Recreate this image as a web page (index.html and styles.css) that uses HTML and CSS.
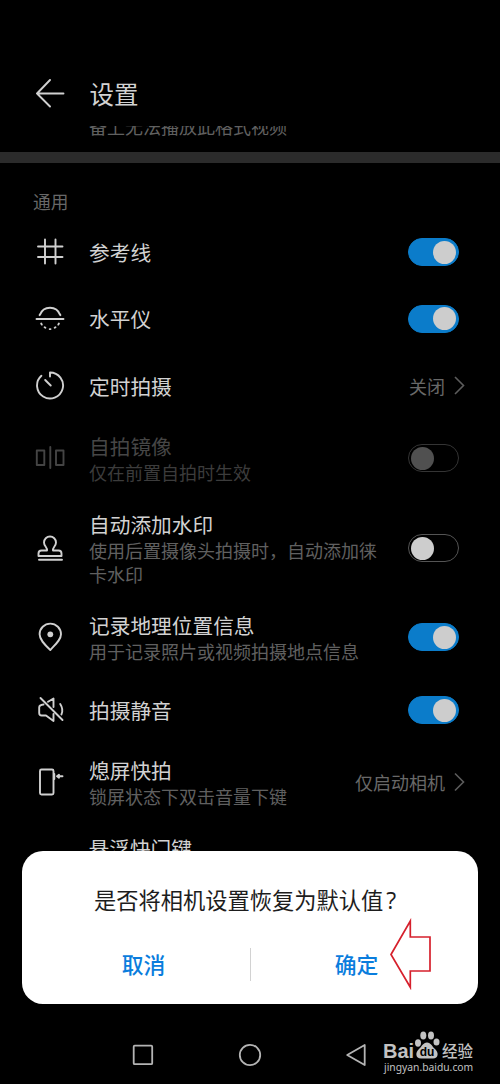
FILE: index.html
```html
<!DOCTYPE html>
<html lang="zh-CN">
<head>
<meta charset="utf-8">
<title>设置</title>
<link rel="stylesheet" href="styles.css">
</head>
<body>
<main class="screen">
  <header class="header">
    <svg class="icon" viewBox="0 0 30 30"><path d="M28.500 14.500H2M15 1 2 14.500l13 13"/></svg>
    <h1 class="heading">设置</h1>
  </header>
  <div class="list">
    <p class="clipped">备上无法播放此格式视频</p>
    <div class="divider"></div>
    <h2 class="section">通用</h2>

    <div class="row row-grid">
      <svg class="icon" viewBox="0 0 30 30"><path d="M10 2.500v24M20.500 2.500v24M3 9.500h24.500M3 20h24.500"/></svg>
      <div class="text"><div class="title">参考线</div></div>
      <span class="toggle on"></span>
    </div>
    <div class="row row-level">
      <svg class="icon" viewBox="0 0 30 30"><path d="M1.500 15h27"/><path d="M5 10.800a10.600 10.600 0 0 1 20 0M5 10.200l-.4 1M25 10.200l.4 1"/><path d="M6.200 19.500l.6 1.100M9.600 23.300l.8.500M14.700 25.100h.8M19.700 23.800l.8-.5M23.300 20.600l.6-1.100"/></svg>
      <div class="text"><div class="title">水平仪</div></div>
      <span class="toggle on"></span>
    </div>
    <div class="row row-timer">
      <svg class="icon" viewBox="0 0 30 30"><path d="M15 5.500V1.500A13 13 0 1 1 6.400 4.800M10.200 9l5.500 5.500"/></svg>
      <div class="text"><div class="title">定时拍摄</div></div>
      <span class="value">关闭</span>
      <svg class="chevron" viewBox="0 0 10 18"><path d="m1 0 8.500 8.500L1 17"/></svg>
    </div>
    <div class="row row-mirror disabled">
      <svg class="icon" viewBox="0 0 30 30"><path d="M15.300 4v21M1.800 7.500h7.500v14.500H1.800zM21 7.500h7.500v14.500H21z"/></svg>
      <div class="text"><div class="title">自拍镜像</div><div class="sub">仅在前置自拍时生效</div></div>
      <span class="toggle"></span>
    </div>
    <div class="row row-stamp">
      <svg class="icon" viewBox="0 0 30 30"><path d="M12 17.500c.7-3-3-4.200-3-8a6 6 0 0 1 12 0c0 3.800-3.700 5-3 8h5.500c2 0 3 1 3 3V23h-23v-2.500c0-2 1-3 3-3zM4 26.800h23"/></svg>
      <div class="text"><div class="title">自动添加水印</div><div class="sub">使用后置摄像头拍摄时，自动添加徕卡水印</div></div>
      <span class="toggle"></span>
    </div>
    <div class="row row-location">
      <svg class="icon" viewBox="0 0 30 30"><path d="M15.300 28C9 22 4.600 17.500 4.600 12.300a10.700 10.700 0 0 1 21.400 0C26 17.500 21 22 15.300 28z"/><circle class="dot" cx="15.300" cy="12.300" r="2.900"/></svg>
      <div class="text"><div class="title">记录地理位置信息</div><div class="sub">用于记录照片或视频拍摄地点信息</div></div>
      <span class="toggle on"></span>
    </div>
    <div class="row row-mute">
      <svg class="icon" viewBox="0 0 30 30"><path d="m5.500 3 22 22M13 6.800 18.500 3.500v8.500M8.500 9.500c-2.800.2-4.300 1-4.300 3v5.500c0 1.500 1 2.500 2.500 2.500h4.300l7.500 5.500V19M25.200 9c2.300 3.500 2.600 7.500 1.200 10.500"/></svg>
      <div class="text"><div class="title">拍摄静音</div></div>
      <span class="toggle on"></span>
    </div>
    <div class="row row-snap">
      <svg class="icon" viewBox="0 0 30 30"><rect x="5" y="2.500" width="13.500" height="25" rx="1.500"/><path d="M19.300 7v5"/><path d="M27.500 9.300h-5.500M24 7.800l-2 1.500 2 1.500"/></svg>
      <div class="text"><div class="title">熄屏快拍</div><div class="sub">锁屏状态下双击音量下键</div></div>
      <span class="value">仅启动相机</span>
      <svg class="chevron" viewBox="0 0 10 18"><path d="m1 .5 8.500 8.500L1 17.500"/></svg>
    </div>
    <div class="row row-float"><div class="text"><div class="title">悬浮快门键</div></div></div>
  </div>

  <nav class="navbar">
    <svg class="nav-icon" viewBox="0 0 24 24"><rect x="2.700" y="2.700" width="18.500" height="18.500" rx="1"/></svg>
    <svg class="nav-icon" viewBox="0 0 24 24"><circle cx="12" cy="12" r="10.200"/></svg>
    <svg class="nav-icon" viewBox="0 0 24 24"><path d="M19.700 2v20L2.200 12z"/></svg>
  </nav>

  <section class="dialog">
    <p class="message">是否将相机设置恢复为默认值<span class="mark">?</span></p>
    <div class="actions">
      <button class="action">取消</button>
      <span class="separator"></span>
      <button class="action">确定</button>
    </div>
  </section>
  <svg class="pointer" viewBox="0 0 44 72"><path d="M2 36.500 21.300 3v16H41v34H21.300v16.300z"/></svg>

  <aside class="watermark">
    <div class="brand">
      <span class="latin">Bai</span>
      <svg class="paw" viewBox="0 0 26 28"><ellipse cx="4" cy="12" rx="3" ry="3.700"/><ellipse cx="9.300" cy="4.600" rx="3" ry="4"/><ellipse cx="17" cy="4.600" rx="3" ry="4"/><ellipse cx="22.500" cy="11" rx="3" ry="3.600"/><path d="M13 11.500c4 0 5 4 8 6.500 4 3.500 3.500 9.500-2 9.500H7c-5.500 0-6-6-2-9.500 3-2.500 4-6.500 8-6.500z"/><text x="13" y="25" text-anchor="middle">du</text></svg>
      <span class="cn">经验</span>
    </div>
    <div class="site">jingyan.baidu.com</div>
  </aside>
</main>
</body>
</html>
```
FILE: styles.css
```css
* { box-sizing: border-box; }
body { margin: 0; background: #000; font-family: "Noto Sans CJK SC", sans-serif; }
h1, h2, p { margin: 0; font-weight: 400; }
.screen { position: relative; width: 500px; height: 1084px; overflow: hidden; display: flex; flex-direction: column; background: #000; color: #d2d2d2; }
.icon { width: 30px; height: 30px; flex: none; fill: none; stroke: #d0d0d0; stroke-width: 1.9; stroke-linecap: round; stroke-linejoin: round; }
.icon .dot { fill: #d0d0d0; stroke: none; }

.header { height: 126px; flex: none; display: flex; align-items: center; gap: 25px; padding: 62px 35px 0 34.500px; }
.heading { font-size: 24.500px; line-height: 36px; }
.list { flex: 1; min-height: 0; overflow: hidden; display: flex; flex-direction: column; }
.clipped { height: 26px; flex: none; padding-left: 89px; margin-top: -12px; margin-bottom: 12px; font-size: 18px; line-height: 24px; color: #606060; }
.divider { height: 11px; flex: none; background: #2b2b2b; }
.section { height: 56px; flex: none; padding: 25px 0 0 33px; font-size: 17.700px; line-height: 26px; color: #686868; }

.row { flex: none; display: flex; align-items: center; padding: 0 41px 0 34.500px; }
.row-grid, .row-level { height: 66.500px; }
.row-timer { height: 68px; }
.row-mirror { height: 76px; }
.row-stamp { height: 104px; }
.row-location { height: 74px; }
.row-mute, .row-snap { height: 72px; }
.row-timer, .row-snap { padding-right: 36px; }
.row-float { height: 60px; padding-left: 64px; }
.text { flex: 1; min-width: 0; padding: 0 10px 0 24.500px; }
.row-grid .text, .row-level .text, .row-timer .text, .row-mute .text, .row-float .text { padding-bottom: 1px; }
.title { font-size: 20.700px; line-height: 28px; white-space: nowrap; }
.sub { width: 300px; font-size: 18px; line-height: 24px; color: #606060; }
.value { padding-bottom: 1px; margin-right: 1px; font-size: 18px; line-height: 26px; color: #686868; }
.row-snap .value { padding-bottom: 0; }
.chevron { width: 10px; height: 18px; margin-left: 8px; overflow: visible; fill: none; stroke: #5c5c5c; stroke-width: 1.600; }
.toggle { width: 51px; height: 28px; flex: none; display: flex; align-items: center; padding: 0 2px; border: 1px solid #545454; border-radius: 14px; }
.toggle::before { content: ""; width: 23px; height: 23px; border-radius: 50%; background: #cdcdcd; }
.toggle.on { justify-content: flex-end; background: #0b7cca; border-color: #0b7cca; }
.disabled .icon { stroke: #444; }
.disabled .title { color: #464646; }
.disabled .sub { color: #3c3c3c; }
.disabled .toggle { border-color: #343434; }
.disabled .toggle::before { background: #505050; }

.navbar { height: 59px; flex: none; display: flex; align-items: center; gap: 83px; padding-left: 131px; }
.nav-icon { width: 24px; height: 24px; fill: none; stroke: #b4b4b4; stroke-width: 1.800; stroke-linejoin: round; }

.dialog { position: absolute; left: 22px; top: 851px; width: 456px; height: 152.500px; border-radius: 21px; background: #fff; }
.message { padding: 31px 0 0 72px; font-size: 22.250px; line-height: 34px; color: #1d1d1d; white-space: nowrap; }
.mark { margin-left: 3px; font-family: "Open Sans", sans-serif; font-size: 23px; line-height: 1; }
.actions { display: flex; align-items: center; justify-content: center; margin-top: 31px; }
.action { width: 212px; padding: 0; border: 0; background: none; color: #0a7ddd; font: 500 21.800px/34px "Noto Sans CJK SC", sans-serif; }
.separator { width: 1px; height: 33px; background: #d2d2d2; }
.pointer { position: absolute; left: 389px; top: 918px; width: 44px; height: 72px; fill: none; stroke: #d6202c; stroke-width: 1.700; }

.watermark { position: absolute; left: 383px; top: 1030px; width: 92px; color: #c2c2c2; }
.brand { display: flex; align-items: flex-end; height: 29px; }
.latin { width: 31px; font: 700 20px/20px "Liberation Sans", sans-serif; margin-bottom: -2px; }
.paw { width: 26px; height: 28px; flex: none; fill: #c2c2c2; }
.paw text { fill: #000; font: 700 12px "Liberation Sans", sans-serif; }
.cn { margin-left: 2px; font-size: 15.500px; line-height: 18px; font-weight: 500; white-space: nowrap; }
.site { margin: 2px 0 0 1px; font: 10.300px/12px "Noto Sans", sans-serif; white-space: nowrap; }
```
